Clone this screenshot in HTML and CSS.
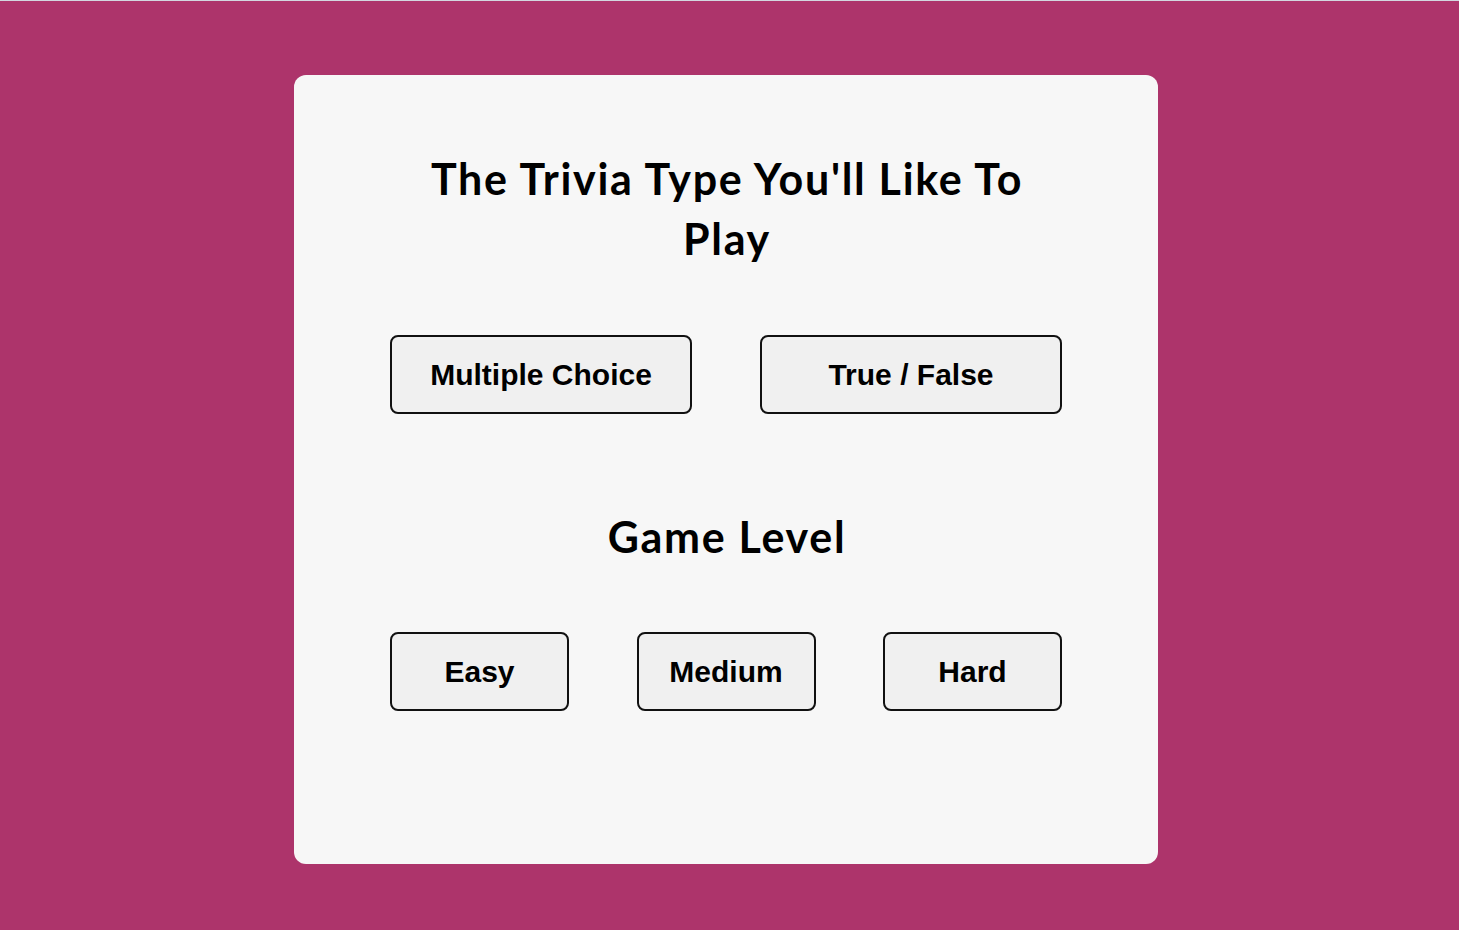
FILE: index.html
```html
<!DOCTYPE html>
<html lang="en">
<head>
<meta charset="utf-8">
<title>Trivia</title>
<link rel="stylesheet" href="styles.css">
</head>
<body>
<main class="page">
  <section class="card">
    <h1 class="title">The Trivia Type You'll Like To Play</h1>
    <div class="row row-type">
      <button class="btn btn-wide">Multiple Choice</button>
      <button class="btn btn-wide">True / False</button>
    </div>
    <h2 class="title title-level">Game Level</h2>
    <div class="row row-level">
      <button class="btn btn-small">Easy</button>
      <button class="btn btn-small">Medium</button>
      <button class="btn btn-small">Hard</button>
    </div>
  </section>
</main>
</body>
</html>
```
FILE: styles.css
```css
html, body {
  margin: 0;
  padding: 0;
}
body {
  background: #ad346b;
  min-height: 100vh;
  border-top: 1px solid #d3d7e0;
  box-sizing: border-box;
}
.page {
  display: flex;
  justify-content: center;
  padding: 74px 7px 0 0;
}
.card {
  width: 864px;
  height: 789px;
  box-sizing: border-box;
  padding: 74px 96px 0;
  background: #f7f7f7;
  border-radius: 12px;
}
.title {
  margin: 0;
  text-align: center;
  font-family: Lato, "Noto Sans", sans-serif;
  font-weight: 700;
  font-size: 43px;
  line-height: 60px;
  letter-spacing: 1.7px;
  color: #000;
  padding: 0 0 0 2px;
}
.title-level {
  margin-top: 93px;
}
.row {
  display: flex;
  justify-content: space-between;
}
.row-type {
  margin-top: 66px;
}
.row-level {
  margin-top: 65px;
}
.btn {
  height: 79px;
  box-sizing: border-box;
  border: 2px solid #111;
  border-radius: 8px;
  background: #f0f0f0;
  font-family: "Liberation Sans", Arial, sans-serif;
  font-weight: 700;
  font-size: 30px;
  color: #000;
  padding: 0;
}
.btn-wide {
  width: 302px;
}
.btn-small {
  width: 179px;
}
```
